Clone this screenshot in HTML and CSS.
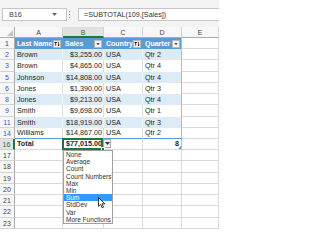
FILE: index.html
```html
<!DOCTYPE html>
<html>
<head>
<meta charset="utf-8">
<link rel="stylesheet" href="styles.css">
</head>
<body>
<div class="app">
  <div class="fbar">
    <div class="namebox"><span>B16</span><svg class="nbdd" width="5" height="3" viewBox="0 0 5 3"><path d="M0 0h5L2.5 3z" fill="#666"/></svg></div>
    <svg class="sep" width="5" height="13" viewBox="0 0 5 13"><rect x="2" y="3" width="1" height="1" fill="#9a9a9a"/><rect x="2" y="6" width="1" height="1" fill="#9a9a9a"/><rect x="2" y="9" width="1" height="1" fill="#9a9a9a"/></svg>
    <div class="formula">=SUBTOTAL(109,[Sales])</div>
  </div>
  <div class="sheet">
    <div class="c corner"><svg width="6" height="6" viewBox="0 0 6 6"><path d="M6 0V6H0z" fill="#c3c3c3"/></svg></div>
    <div class="c ch">A</div><div class="c ch sel">B</div><div class="c ch">C</div><div class="c ch">D</div><div class="c ch">E</div>

    <div class="c rh">1</div>
    <div class="c th">Last Name<span class="fb"><svg width="6" height="6" viewBox="0 0 6 6"><path d="M0 1h3.4L2.1 2.6V5L1.3 4.5V2.6z" fill="#222"/><path d="M4.6 0.8V5" stroke="#222" stroke-width="0.8"/><path d="M3.6 3.8L4.6 5.2 5.6 3.8z" fill="#222"/></svg></span></div>
    <div class="c th">Sales<span class="fb"><svg width="6" height="6" viewBox="0 0 6 6"><path d="M1.3 2.2h3.4L3 4z" fill="#222"/></svg></span></div>
    <div class="c th">Country<span class="fb"><svg width="6" height="6" viewBox="0 0 6 6"><path d="M0 1h3.4L2.1 2.6V5L1.3 4.5V2.6z" fill="#222"/><path d="M4.6 0.8V5" stroke="#222" stroke-width="0.8"/><path d="M3.6 3.8L4.6 5.2 5.6 3.8z" fill="#222"/></svg></span></div>
    <div class="c th te">Quarter<span class="fb"><svg width="6" height="6" viewBox="0 0 6 6"><path d="M1.3 2.2h3.4L3 4z" fill="#222"/></svg></span></div>
    <div class="c e"></div>

    <div class="c rh bl">2</div>
    <div class="c t b">Brown</div><div class="c t b r">$3,255.00</div><div class="c t b">USA</div><div class="c t b te">Qtr 2</div><div class="c e"></div>

    <div class="c rh bl">3</div>
    <div class="c t">Brown</div><div class="c t r">$4,865.00</div><div class="c t">USA</div><div class="c t te">Qtr 4</div><div class="c e"></div>

    <div class="c rh bl">5</div>
    <div class="c t b">Johnson</div><div class="c t b r">$14,808.00</div><div class="c t b">USA</div><div class="c t b te">Qtr 4</div><div class="c e"></div>

    <div class="c rh bl">6</div>
    <div class="c t">Jones</div><div class="c t r">$1,390.00</div><div class="c t">USA</div><div class="c t te">Qtr 3</div><div class="c e"></div>

    <div class="c rh bl">8</div>
    <div class="c t b">Jones</div><div class="c t b r">$9,213.00</div><div class="c t b">USA</div><div class="c t b te">Qtr 4</div><div class="c e"></div>

    <div class="c rh bl">9</div>
    <div class="c t">Smith</div><div class="c t r">$9,698.00</div><div class="c t">USA</div><div class="c t te">Qtr 1</div><div class="c e"></div>

    <div class="c rh bl">11</div>
    <div class="c t b">Smith</div><div class="c t b r">$18,919.00</div><div class="c t b">USA</div><div class="c t b te">Qtr 3</div><div class="c e"></div>

    <div class="c rh bl">14</div>
    <div class="c t lt">Williams</div><div class="c t lt r">$14,867.00</div><div class="c t lt">USA</div><div class="c t lt te">Qtr 2</div><div class="c e"></div>

    <div class="c rh sel">16</div>
    <div class="c tot">Total</div>
    <div class="c tot r cur">$77,015.00<span class="selbox"></span><span class="fill"></span><span class="cdd"><svg width="5" height="3" viewBox="0 0 5 3"><path d="M0 0h5L2.5 3z" fill="#333"/></svg></span></div>
    <div class="c tot"></div>
    <div class="c tot te r d16">8<span class="rs"></span></div>
    <div class="c e"></div>

    <div class="c rh">17</div><div class="c e"></div><div class="c e"></div><div class="c e"></div><div class="c e"></div><div class="c e"></div>
    <div class="c rh">18</div><div class="c e"></div><div class="c e"></div><div class="c e"></div><div class="c e"></div><div class="c e"></div>
    <div class="c rh">19</div><div class="c e"></div><div class="c e"></div><div class="c e"></div><div class="c e"></div><div class="c e"></div>
    <div class="c rh">20</div><div class="c e"></div><div class="c e"></div><div class="c e"></div><div class="c e"></div><div class="c e"></div>
    <div class="c rh">21</div><div class="c e"></div><div class="c e"></div><div class="c e"></div><div class="c e"></div><div class="c e"></div>
    <div class="c rh">22</div><div class="c e"></div><div class="c e"></div><div class="c e"></div><div class="c e"></div><div class="c e"></div>
    <div class="c rh">23</div><div class="c e"></div><div class="c e"></div><div class="c e"></div><div class="c e"></div><div class="c e"></div>
  </div>

  <div class="ddlist">
    <div class="it">None</div>
    <div class="it">Average</div>
    <div class="it">Count</div>
    <div class="it">Count Numbers</div>
    <div class="it">Max</div>
    <div class="it">Min</div>
    <div class="it hl">Sum</div>
    <div class="it">StdDev</div>
    <div class="it">Var</div>
    <div class="it">More Functions</div>
  </div>

  <svg class="cursor" width="8" height="12" viewBox="0 0 8 12"><path d="M0.5 0.5V9.3L2.6 7.3 4.1 10.8 5.5 10.2 4 6.8H6.8Z" fill="#fff" stroke="#000" stroke-width="0.8" stroke-linejoin="round"/></svg>
</div>
</body>
</html>
```

FILE: styles.css
```css
html, body {
  margin: 0;
  padding: 0;
  background: #ffffff;
}

body {
  font-family: "Liberation Sans", Arial, sans-serif;
}

.app {
  position: relative;
  width: 219px;
  height: 230px;
  overflow: hidden;
  background: #ffffff;
}

/* formula bar */
.fbar {
  height: 27px;
  box-sizing: border-box;
  padding-top: 8px;
  background: #f3f3f3;
  display: flex;
  align-items: flex-start;
}

.namebox {
  margin-left: 2px;
  width: 65px;
  height: 13px;
  box-sizing: border-box;
  border: 1px solid #c6c6c6;
  background: #ffffff;
  display: flex;
  align-items: center;
  padding-left: 6px;
  font-size: 7.2px;
  color: #444444;
}

.nbdd {
  margin-left: auto;
  margin-right: 9px;
}

.sep {
  display: block;
}

.formula {
  margin-left: 6px;
  flex: 1;
  height: 13px;
  box-sizing: border-box;
  border: 1px solid #c6c6c6;
  border-right: none;
  background: #ffffff;
  padding-left: 5px;
  font-size: 7.2px;
  color: #333333;
  display: flex;
  align-items: center;
  white-space: nowrap;
}

/* sheet grid */
.sheet {
  display: grid;
  grid-template-columns: 15px 48px 41px 39px 39px 37px;
  grid-template-rows: 11px 11px 11px 12px 11px 11px 11px 12px 11px 11px 11px 11px 12px 11px 11px 11px 12px 11px;
}

.c {
  box-sizing: border-box;
  border-right: 1px solid #d9d9d9;
  border-bottom: 1px solid #d9d9d9;
  display: flex;
  align-items: center;
  padding: 0 1px 0 2px;
  font-size: 7.2px;
  line-height: 1;
  color: #1e1e1e;
  white-space: nowrap;
  overflow: hidden;
  background: #ffffff;
}

.r {
  justify-content: flex-end;
}

.corner {
  background: #f7f7f7;
  border-right: 1px solid #ababab;
  border-bottom: 1px solid #ababab;
  align-items: flex-end;
  justify-content: flex-end;
  padding: 0 1px 1px 0;
}

.corner svg {
  display: block;
}

.ch {
  background: #f7f7f7;
  border-right: 1px solid #d4d4d4;
  border-bottom: 1px solid #ababab;
  justify-content: center;
  color: #444444;
  font-size: 7px;
  padding: 1px 0 0 0;
}

.ch.sel {
  background: #e1e1e1;
  color: #217346;
  border-bottom: 2px solid #217346;
}

.rh {
  background: #f7f7f7;
  border-right: 1px solid #ababab;
  border-bottom: 1px solid #d4d4d4;
  justify-content: center;
  color: #444444;
  font-size: 7px;
  padding: 0;
}

.rh.bl {
  color: #3b55d6;
}

.rh.sel {
  background: #e1e1e1;
  color: #217346;
  border-right: 2px solid #217346;
}

/* table */
.th {
  background: #5b9bd5;
  color: #ffffff;
  font-weight: bold;
  font-size: 7px;
  border-right: 1px solid #5b9bd5;
  border-bottom: none;
}

.fb {
  margin-left: auto;
  width: 8px;
  height: 8px;
  flex: none;
  box-sizing: border-box;
  background: #f4f4f4;
  border: 1px solid #b9b9b9;
  display: flex;
  align-items: center;
  justify-content: center;
}

.fb svg {
  display: block;
}

.t {
  border-bottom: none;
  border-right: 1px solid #dcdcdc;
}

.t.b {
  background: #ddebf7;
  border-right-color: #eef4fb;
}

.t.lt {
  border-bottom: 1px solid #5b9bd5;
}

.te {
  border-right-color: #9bc2e6 !important;
}

.tot {
  font-weight: bold;
  border-bottom: 1px solid #d9d9d9;
}

.cur {
  position: relative;
  overflow: visible;
}

.selbox {
  position: absolute;
  left: -1px;
  top: -1px;
  right: 0;
  bottom: -1px;
  border: 2px solid #217346;
  box-sizing: border-box;
  z-index: 3;
}

.fill {
  position: absolute;
  right: -2px;
  bottom: -2px;
  width: 4px;
  height: 4px;
  box-sizing: border-box;
  background: #217346;
  border: 1px solid #ffffff;
  z-index: 4;
}

.cdd {
  position: absolute;
  left: 100%;
  top: 0;
  width: 8px;
  height: 9px;
  box-sizing: border-box;
  background: #f0f0f0;
  border: 1px solid #ababab;
  display: flex;
  align-items: center;
  justify-content: center;
  z-index: 3;
}

.cdd svg {
  display: block;
}

.d16 {
  position: relative;
  overflow: visible;
  padding-right: 2px;
}

.rs {
  position: absolute;
  right: 0;
  bottom: 0;
  width: 0;
  height: 0;
  border-left: 3px solid transparent;
  border-bottom: 3px solid #5b9bd5;
}

.e {
  background: #ffffff;
}

/* dropdown list */
.ddlist {
  position: absolute;
  left: 63px;
  top: 150px;
  width: 50px;
  box-sizing: border-box;
  border: 1px solid #a0a0a0;
  background: #ffffff;
  z-index: 5;
}

.it {
  height: 7.2px;
  line-height: 7.2px;
  font-size: 6.5px;
  padding-left: 2px;
  color: #333333;
  white-space: nowrap;
  overflow: hidden;
}

.it.hl {
  background: #3399ff;
  color: #ffffff;
}

.cursor {
  position: absolute;
  left: 98px;
  top: 197px;
  z-index: 6;
}
```
